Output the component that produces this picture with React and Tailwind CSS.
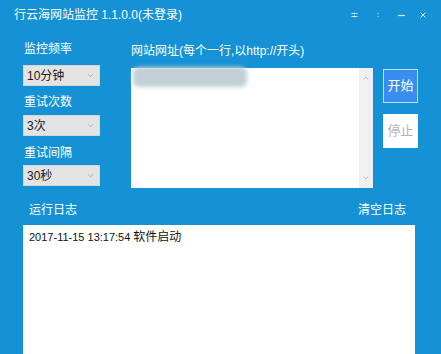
import { ChevronDown, ChevronUp } from 'lucide-react';

const font = { fontFamily: '"Liberation Sans", "Noto Sans CJK SC", sans-serif' };

function Select({ value }) {
    return (
        <div className="h-[21px] w-[77px] bg-[#e3e3e3] border border-[#d6d6d6] flex items-center justify-between pl-[3px] pr-[4px] text-[12px] text-[#1a1a1a]">
            <span className="leading-none">{value}</span>
            <ChevronDown className="w-[9px] h-[9px] text-[#777]" strokeWidth={1.25} />
        </div>
    );
}

function TitleIcons() {
    return (
        <div className="flex items-center h-full text-white/80 pr-[15px]">
            <svg width="7" height="6" viewBox="0 0 7 6" className="mr-[17px]">
                <path d="M0.5 1.5h6M0.5 4.5h6" stroke="currentColor" strokeWidth="1" />
                <path d="M3.5 0v6" stroke="currentColor" strokeWidth="0.8" opacity="0.5" />
            </svg>
            <svg width="6" height="6" viewBox="0 0 6 6" className="mr-[17px] opacity-60">
                <circle cx="3" cy="1.5" r="0.8" fill="currentColor" />
                <circle cx="3" cy="4.5" r="0.8" fill="currentColor" />
            </svg>
            <svg width="7" height="3" viewBox="0 0 7 3" className="mr-[15px]">
                <path d="M0 1.5h7" stroke="currentColor" strokeWidth="1.2" />
            </svg>
            <svg width="6" height="6" viewBox="0 0 6 6">
                <path d="M0.5 0.5l5 5M5.5 0.5l-5 5" stroke="currentColor" strokeWidth="1" />
            </svg>
        </div>
    );
}

export default function App() {
    return (
        <div style={font} className="w-[441px] h-[354px] bg-[#1592d5] overflow-hidden flex flex-col text-white">
            {/* title bar */}
            <div className="h-[30px] flex items-center justify-between pl-[14px]">
                <span className="text-[12px] leading-none">行云海网站监控 1.1.0.0(未登录)</span>
                <TitleIcons />
            </div>

            {/* settings + urls */}
            <div className="flex pl-[23px] pt-[10px]">
                <div className="w-[77px] flex flex-col text-[12px]">
                    <div className="leading-[19px] pl-[1px]">监控频率</div>
                    <div className="mt-[6px]"><Select value="10分钟" /></div>
                    <div className="leading-[19px] pl-[1px] mt-[7px]">重试次数</div>
                    <div className="mt-[3px]"><Select value="3次" /></div>
                    <div className="leading-[19px] pl-[1px] mt-[8px]">重试间隔</div>
                    <div className="mt-[2px]"><Select value="30秒" /></div>
                </div>

                <div className="ml-[31px] flex flex-col">
                    <div className="text-[12px] leading-[18px] mt-[2px]">网站网址(每个一行,以http://开头)</div>
                    <div className="mt-[8px] w-[242px] h-[120px] bg-white flex">
                        <div className="flex-1 relative">
                            <div className="absolute left-[2px] top-[-1px] w-[114px] h-[20px] rounded-[6px] bg-[#c2cfd6] blur-[2px]" />
                        </div>
                        <div className="w-[14px] bg-[#f0f0f0] flex flex-col items-center justify-between py-[6px]">
                            <ChevronUp className="w-[8px] h-[8px] text-[#a0a0a0]" strokeWidth={2} />
                            <ChevronDown className="w-[8px] h-[8px] text-[#a0a0a0]" strokeWidth={2} />
                        </div>
                    </div>
                </div>

                <div className="ml-[10px] pt-[29px] flex flex-col">
                    <div className="w-[35px] h-[34px] bg-[#3a8cee] border border-[#b4e4f7] flex items-center justify-center text-[13px] text-white">
                        开始
                    </div>
                    <div className="mt-[11px] w-[35px] h-[34px] bg-white flex items-center justify-center text-[13px] text-[#b3b3b3]">
                        停止
                    </div>
                </div>
            </div>

            {/* log header */}
            <div className="mt-[13px] flex justify-between pl-[29px] pr-[35px] text-[12px] leading-[18px]">
                <span>运行日志</span>
                <span>清空日志</span>
            </div>

            {/* log */}
            <div className="mt-[6px] ml-[23px] w-[392px] flex-1 bg-white pl-[6px] pt-[4px]">
                <div className="text-[#111] leading-[16px] flex items-baseline">
                    <span className="text-[11px]">2017-11-15 13:17:54</span>
                    <span className="text-[12px] ml-[3px]">软件启动</span>
                </div>
            </div>
        </div>
    );
}
